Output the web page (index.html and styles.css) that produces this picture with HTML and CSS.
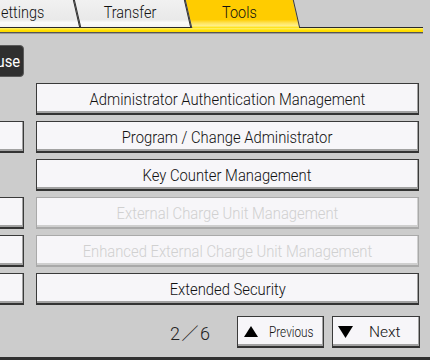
FILE: index.html
```html
<!DOCTYPE html>
<html>
<head>
<meta charset="utf-8">
<link rel="stylesheet" href="styles.css">
</head>
<body>
<div class="screen">
  <nav class="tabs">
    <div class="tab tab-first"><span class="lbl lbl-tab lbl-left">ettings</span></div>
    <div class="tab tab-mid"><span class="lbl lbl-tab">Transfer</span></div>
    <div class="tab tab-active"><span class="lbl lbl-tab">Tools</span></div>
  </nav>
  <div class="rule"></div>
  <div class="grid">
    <div class="btn side dark"><span class="lbl lbl-right">use</span></div><div></div>
    <div></div><div class="btn"><span class="lbl">Administrator Authentication Management</span></div>
    <div class="btn side"></div><div class="btn"><span class="lbl">Program / Change Administrator</span></div>
    <div></div><div class="btn"><span class="lbl">Key Counter Management</span></div>
    <div class="btn side"></div><div class="btn disabled"><span class="lbl">External Charge Unit Management</span></div>
    <div class="btn side"></div><div class="btn disabled"><span class="lbl">Enhanced External Charge Unit Management</span></div>
    <div class="btn side"></div><div class="btn"><span class="lbl">Extended Security</span></div>
  </div>
  <div class="pager">
    <span class="count">2<span class="slash">／</span>6</span>
    <div class="btn pbtn prev">
      <svg class="tri" width="14" height="11" viewBox="0 0 14 11"><polygon points="7,0 14,11 0,11" fill="#000"/></svg>
      <span class="plbl plbl-prev">Previous</span>
    </div>
    <div class="btn pbtn next">
      <svg class="tri" width="15" height="12" viewBox="0 0 15 12"><polygon points="0,0 15,0 7.5,12" fill="#000"/></svg>
      <span class="plbl">Next</span>
    </div>
  </div>
  <div class="foot"></div>
</div>
</body>
</html>
```

FILE: styles.css
```css
html, body {
  margin: 0;
  padding: 0;
}
body {
  background: #cccccc;
  font-family: Roboto, "Liberation Sans", sans-serif;
  color: #1e1e1e;
  overflow: hidden;
  width: 430px;
  height: 360px;
}
.screen {
  width: 430px;
  height: 360px;
  display: flex;
  flex-direction: column;
}

.lbl {
  display: inline-block;
  transform: scaleX(0.87);
  white-space: nowrap;
}
.lbl-tab {
  transform: scaleX(0.85);
}
.lbl-left {
  transform-origin: left center;
}
.lbl-right {
  transform-origin: right center;
}

/* tabs */
.tabs {
  display: flex;
  height: 27px;
  position: relative;
  z-index: 2;
}
.tab {
  position: relative;
  isolation: isolate;
  height: 27px;
  box-sizing: border-box;
  display: flex;
  align-items: center;
  justify-content: center;
  padding-bottom: 4px;
  font-size: 17px;
  font-weight: 300;
  color: #111;
}
.tab::before {
  content: "";
  position: absolute;
  inset: 0;
  z-index: -1;
  transform: skewX(13deg);
  border-right: 1px solid #2e2e2e;
  border-left: 1px solid #2e2e2e;
  background: linear-gradient(#f1f1f1 0%, #e9e9e9 72%, #fbfbfb 84%, #f4f4f4 100%);
}
.tab-first {
  width: 107px;
  margin-left: -30px;
  justify-content: flex-start;
  padding-left: 31px;
}
.tab-mid {
  width: 111px;
  padding-right: 6px;
}
.tab-active {
  width: 109px;
  height: 28px;
  margin-bottom: -1px;
  padding-bottom: 5px;
  padding-right: 6px;
}
.tab-active::before {
  background: linear-gradient(#ffcc00 0%, #ffcc00 70%, #ffe45a 82%, #fff08a 92%, #ffe000 100%);
  border-left-color: #3a3a3a;
  border-right-color: #3a3a3a;
}

.rule {
  width: 423px;
  height: 4px;
  border-top: 1px solid #2a2a2a;
  border-bottom: 1px solid #555;
  background: linear-gradient(#fff27a, #ffe000 60%, #ffd800);
  box-shadow: 0 1px 0 #9c9c9c;
}

/* grid of buttons */
.grid {
  display: grid;
  grid-template-columns: 24px 383px;
  grid-auto-rows: 32px;
  column-gap: 12px;
  row-gap: 6px;
  margin-top: 12px;
}
.btn {
  box-sizing: border-box;
  background: #f7f6f9;
  border: 1px solid #3a3a3a;
  border-bottom: 2px solid #333;
  box-shadow: inset -1px -2px 0 #a2a2a2;
  display: flex;
  align-items: center;
  justify-content: center;
  font-size: 17px;
  font-weight: 300;
  color: #111;
  padding-top: 1px;
  white-space: nowrap;
}
.btn.side {
  margin-left: -20px;
}
.btn.dark {
  background: #2f2f2f;
  border: 1px solid #5a5a5a;
  border-radius: 4px;
  box-shadow: none;
  color: #fff;
  font-weight: 400;
  justify-content: flex-end;
  padding-right: 3px;
  padding-top: 0;
}
.btn.disabled {
  border-color: #a9a9a9;
  box-shadow: inset -1px -2px 0 #cfcfcf;
  color: #d0d0d0;
}

/* pager */
.pager {
  display: flex;
  align-items: center;
  height: 32px;
  margin-top: 11px;
}
.count {
  margin-left: 170px;
  width: 58px;
  font-size: 18px;
  font-weight: 300;
  color: #222;
  font-family: Roboto, "Noto Sans CJK JP", sans-serif;
}
.slash {
  font-family: "Noto Sans CJK JP", sans-serif;
  font-weight: 400;
  font-size: 17px;
  color: #222;
  display: inline-block;
  width: 20px;
  text-align: center;
}
.pbtn {
  height: 32px;
  font-size: 15.5px;
  justify-content: flex-start;
  padding-top: 0;
}
.plbl {
  display: inline-block;
  transform-origin: left center;
}
.plbl-prev {
  transform: scaleX(0.76);
}
.prev {
  width: 87px;
  margin-left: 9px;
  padding-left: 6px;
  gap: 11px;
}
.next {
  width: 88px;
  margin-left: 8px;
  padding-left: 5px;
  gap: 16px;
}
.tri {
  display: block;
  flex: none;
}
.foot {
  margin-top: 9px;
  height: 3px;
  background: #303030;
}
```
